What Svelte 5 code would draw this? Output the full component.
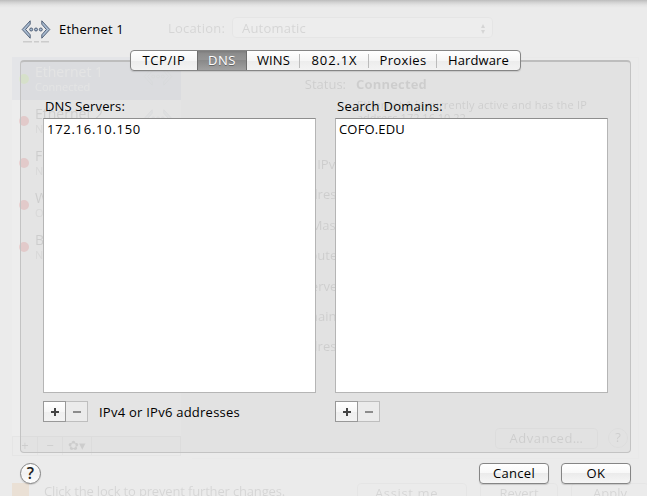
<script>
  const tabs = [
    { name: 'TCP/IP', width: 66, text: 43 },
    { name: 'DNS', width: 50, text: 28 },
    { name: 'WINS', width: 53, text: 33 },
    { name: '802.1X', width: 69, text: 46 },
    { name: 'Proxies', width: 68, text: 47 },
    { name: 'Hardware', width: 83, text: 61 }
  ];
  let active = $state('DNS');

  const services = [
    { name: 'Ethernet 1', status: 'Connected', on: true },
    { name: 'Ethernet 2', status: 'Not Connected' },
    { name: 'FireWire', status: 'Not Connected' },
    { name: 'Wi-Fi', status: 'Off' },
    { name: 'Bluetooth', status: 'Not Connected' }
  ];
  const fields = ['Configure IPv4:', 'IP Address:', 'Subnet Mask:', 'Router:', 'DNS Server:', 'Search Domains:', 'IPv6 Address:'];

  // Spreads the letters of a label so that it takes the given width.
  function fit(node, width) {
    const natural = node.getBoundingClientRect().width;
    node.style.letterSpacing = (width - natural) / node.textContent.length + 'px';
  }
</script>

{#snippet arrows()}
  <svg class="arrows" width="30" height="24" viewBox="0 0 30 24">
    <path d="M2 21.8H11M13 21.8H18M20 21.8H28" stroke="#888" stroke-width="1.4" opacity=".3" />
    <g fill="#a9bbd0" stroke="#46566e" stroke-width=".9" stroke-linejoin="round">
      <path d="M9.2 .8V4.2L4.6 9.5L9.2 14.8V18.2L1.2 9.5Z" />
      <path d="M20.8 .8V4.2L25.4 9.5L20.8 14.8V18.2L28.8 9.5Z" />
      <circle cx="10.2" cy="9.5" r="1.5" /><circle cx="15" cy="9.5" r="1.5" /><circle cx="19.8" cy="9.5" r="1.5" />
    </g>
  </svg>
{/snippet}

{#snippet addRemove()}
  <div class="pair">
    <button class="add" aria-label="Add"><svg width="8" height="8"><path d="M0 4H8M4 0V8" stroke="#444" stroke-width="2" /></svg></button>
    <button class="remove" aria-label="Remove"><svg width="8" height="8"><path d="M0 4H8" stroke="#8c8c8c" stroke-width="2" /></svg></button>
  </div>
{/snippet}

<div class="window">
  <div class="behind" aria-hidden="true">
    <div class="location"><span use:fit={57}>Location:</span><div class="popup"><span use:fit={64}>Automatic</span><span class="updown">▴<br />▾</span></div></div>
    <div class="network">
      <div class="side">
        <div class="list">
          {#each services as s}
            <div class="service" class:selected={s.on}>
              <i></i>
              <div><b>{s.name}</b><small>{s.status}</small></div>
              {@render arrows()}
            </div>
          {/each}
        </div>
        <div class="tools"><span>+</span><span>−</span><span class="gear">✿▾</span></div>
      </div>
      <div class="details">
        <div class="line"><label>Status:</label><strong use:fit={71}>Connected</strong></div>
        <p><span use:fit={230}>Ethernet 1 is currently active and has the IP</span><br />address 172.16.10.22</p>
        {#each fields as f}<div class="line field"><label>{f}</label></div>{/each}
        <div class="more"><span class="btn"><span use:fit={74}>Advanced…</span></span><span class="round">?</span></div>
      </div>
    </div>
    <div class="lockbar">
      <i class="lock"></i><span class="locktext"><span use:fit={241}>Click the lock to prevent further changes.</span></span>
      <span class="btn assist"><span use:fit={74}>Assist me…</span></span><span class="btn">Revert</span><span class="btn">Apply</span>
    </div>
  </div>

  <div class="sheet">
    <header>{@render arrows()}<span use:fit={65}>Ethernet 1</span></header>
    <section class="panel">
      <nav>
        {#each tabs as t}
          <button class:active={active === t.name} style:width="{t.width}px" onclick={() => (active = t.name)}><span use:fit={t.text}>{t.name}</span></button>
        {/each}
      </nav>
      <div class="columns">
        <div class="column">
          <h2><span use:fit={80}>DNS Servers:</span></h2>
          <div class="box"><span use:fit={94}>172.16.10.150</span></div>
          <div class="under">{@render addRemove()}<span use:fit={141}>IPv4 or IPv6 addresses</span></div>
        </div>
        <div class="column">
          <h2><span use:fit={106}>Search Domains:</span></h2>
          <div class="box"><span use:fit={66}>COFO.EDU</span></div>
          <div class="under">{@render addRemove()}</div>
        </div>
      </div>
    </section>
    <footer>
      <button class="help" aria-label="Help">?</button>
      <button class="push"><span use:fit={42}>Cancel</span></button>
      <button class="push"><span use:fit={19}>OK</span></button>
    </footer>
  </div>
</div>

<style>
  :global(body) { margin: 0; }
  * { box-sizing: border-box; }
  .window {
    position: relative; width: 647px; height: 496px; overflow: hidden; background: #ebebeb;
    font: 13px/16px "Open Sans", "Noto Sans", sans-serif; color: #000;
  }
  span { display: inline-block; white-space: nowrap; }
  button { font: inherit; color: #000; padding: 0; margin: 0; display: flex; align-items: center; justify-content: center; }
  svg { display: block; flex: none; }

  .sheet { position: relative; height: 496px; padding: 18px 16px 0 20px; display: flex; flex-direction: column; background: linear-gradient(#bcbcbc 0, #cfcfcf 2px, #e3e3e3 5px, transparent 8px); }
  header { display: flex; height: 42px; padding-left: 1px; gap: 8px; }
  header .arrows { margin-top: 2px; }
  header > span { margin-top: 3px; }
  .panel { width: 611px; height: 393px; border: 1px solid #c3c3c3; border-top: 2px solid #bdbdbd; border-radius: 4px; background: rgba(0, 0, 0, .036); }
  nav { display: flex; width: 391px; height: 21px; margin: -12px 0 0 109px; border: 1px solid #858585; border-radius: 4px; background: linear-gradient(#fff, #f6f6f6 50%, #ececec 51%, #f3f3f3); box-shadow: 0 1px 1px rgba(0, 0, 0, .12); }
  nav button { flex: none; border: 0; background: transparent; height: 19px; padding-bottom: 1px; }
  nav button.active { background: linear-gradient(#7c7c7c, #8d8d8d 15%, #959595 48%, #898989 50%, #a0a0a0); color: #fff; box-shadow: inset 1px 0 #6e6e6e, inset -1px 0 #6e6e6e; text-shadow: 0 1px #666; }
  nav button:nth-child(n + 3):not(:last-child) { background: linear-gradient(#bbb, #bbb) right 3px / 1px 14px no-repeat; }

  .columns { display: flex; gap: 19px; padding: 27px 0 0 22px; }
  .column { width: 273px; }
  h2 { margin: 0 0 0 2px; height: 20px; font: inherit; }
  .box { width: 273px; height: 275px; border: 1px solid #b5b5b5; border-top-color: #8e8e8e; background: #fff; padding: 2px 3px; }
  .under { display: flex; align-items: center; margin-top: 8px; gap: 11px; }
  .pair { display: flex; width: 45px; height: 21px; }
  .pair button { height: 21px; }
  .add { width: 23px; border: 1px solid #989898; background: linear-gradient(#fff, #f7f7f7 50%, #efefef 51%, #f3f3f3); }
  .remove { width: 22px; border: 1px solid #bebebe; border-left: 0; background: #ebebeb; }

  footer { display: flex; align-items: center; margin-top: 9px; height: 23px; }
  .help { width: 21px; height: 21px; margin-right: auto; border: 1px solid #848484; border-radius: 50%; background: linear-gradient(#fff, #f1f1f1 50%, #fff); font-size: 16px; font-weight: 600; color: #222; box-shadow: 0 1px 1px rgba(0, 0, 0, .15); padding-bottom: 1px; }
  .push { width: 70px; height: 21px; margin-left: 12px; padding-bottom: 1px; border: 1px solid #858585; border-radius: 4px; background: linear-gradient(#fff, #f8f8f8 48%, #ebebeb 50%, #f6f6f6); box-shadow: 0 1px 1px rgba(0, 0, 0, .15); }

  .behind { position: absolute; inset: 0; opacity: .1; filter: blur(.7px); color: #222; }
  .location { display: flex; align-items: center; padding: 17px 0 0 168px; gap: 7px; height: 38px; }
  .popup { display: flex; align-items: center; justify-content: space-between; width: 261px; height: 21px; border: 1px solid #bbb; border-radius: 4px; background: #fff; padding: 0 7px 0 9px; }
  .updown { font-size: 8px; line-height: 6px; }
  .network { display: flex; gap: 11px; margin: 19px 0 0 12px; }
  .side { width: 169px; }
  .list { height: 379px; background: #fff; }
  .service { display: flex; align-items: center; height: 42px; padding: 0 8px 0 7px; line-height: 15px; }
  .service > div { width: 111px; margin-left: 6px; }
  .service b { display: block; font-size: 14px; font-weight: 500; }
  .service small { display: block; font-size: 11px; white-space: nowrap; color: #888; }
  .service .arrows { opacity: .5; }
  .service i { flex: none; width: 10px; height: 10px; border-radius: 50%; background: #f00000; }
  .service.selected { height: 43px; background: #a9bbd8; color: #fff; }
  .service.selected small { color: #fff; }
  .service.selected i { background: #78e000; }
  .tools { display: flex; height: 20px; border: 1px solid #bbb; }
  .tools span { width: 25px; border-right: 1px solid #bbb; text-align: center; }
  .tools .gear { width: 29px; }
  .details { width: 447px; height: 402px; border: 1px solid #ddd; border-left: 0; padding-top: 18px; }
  .line { display: flex; gap: 10px; height: 19px; }
  .line label { width: 154px; text-align: right; white-space: nowrap; }
  p { margin: 3px 0 32px 165px; font-size: 11px; line-height: 13px; height: 26px; }
  .field { height: 30.4px; }
  .more { display: flex; justify-content: flex-end; gap: 10px; margin-top: 59px; padding-right: 10px; }
  .btn { width: 103px; height: 21px; border: 1px solid #bbb; border-radius: 4px; text-align: center; line-height: 18px; }
  .round { width: 20px; height: 20px; border: 1px solid #bbb; border-radius: 50%; text-align: center; }
  .lockbar { display: flex; gap: 13px; margin: 24px 0 0 12px; }
  .lock { flex: none; width: 17px; height: 17px; background: #e98b20; }
  .locktext { flex: none; width: 300px; margin-left: 2px; }
  .lockbar .btn { width: 78px; flex: none; }
  .lockbar .assist { width: 110px; }
</style>
